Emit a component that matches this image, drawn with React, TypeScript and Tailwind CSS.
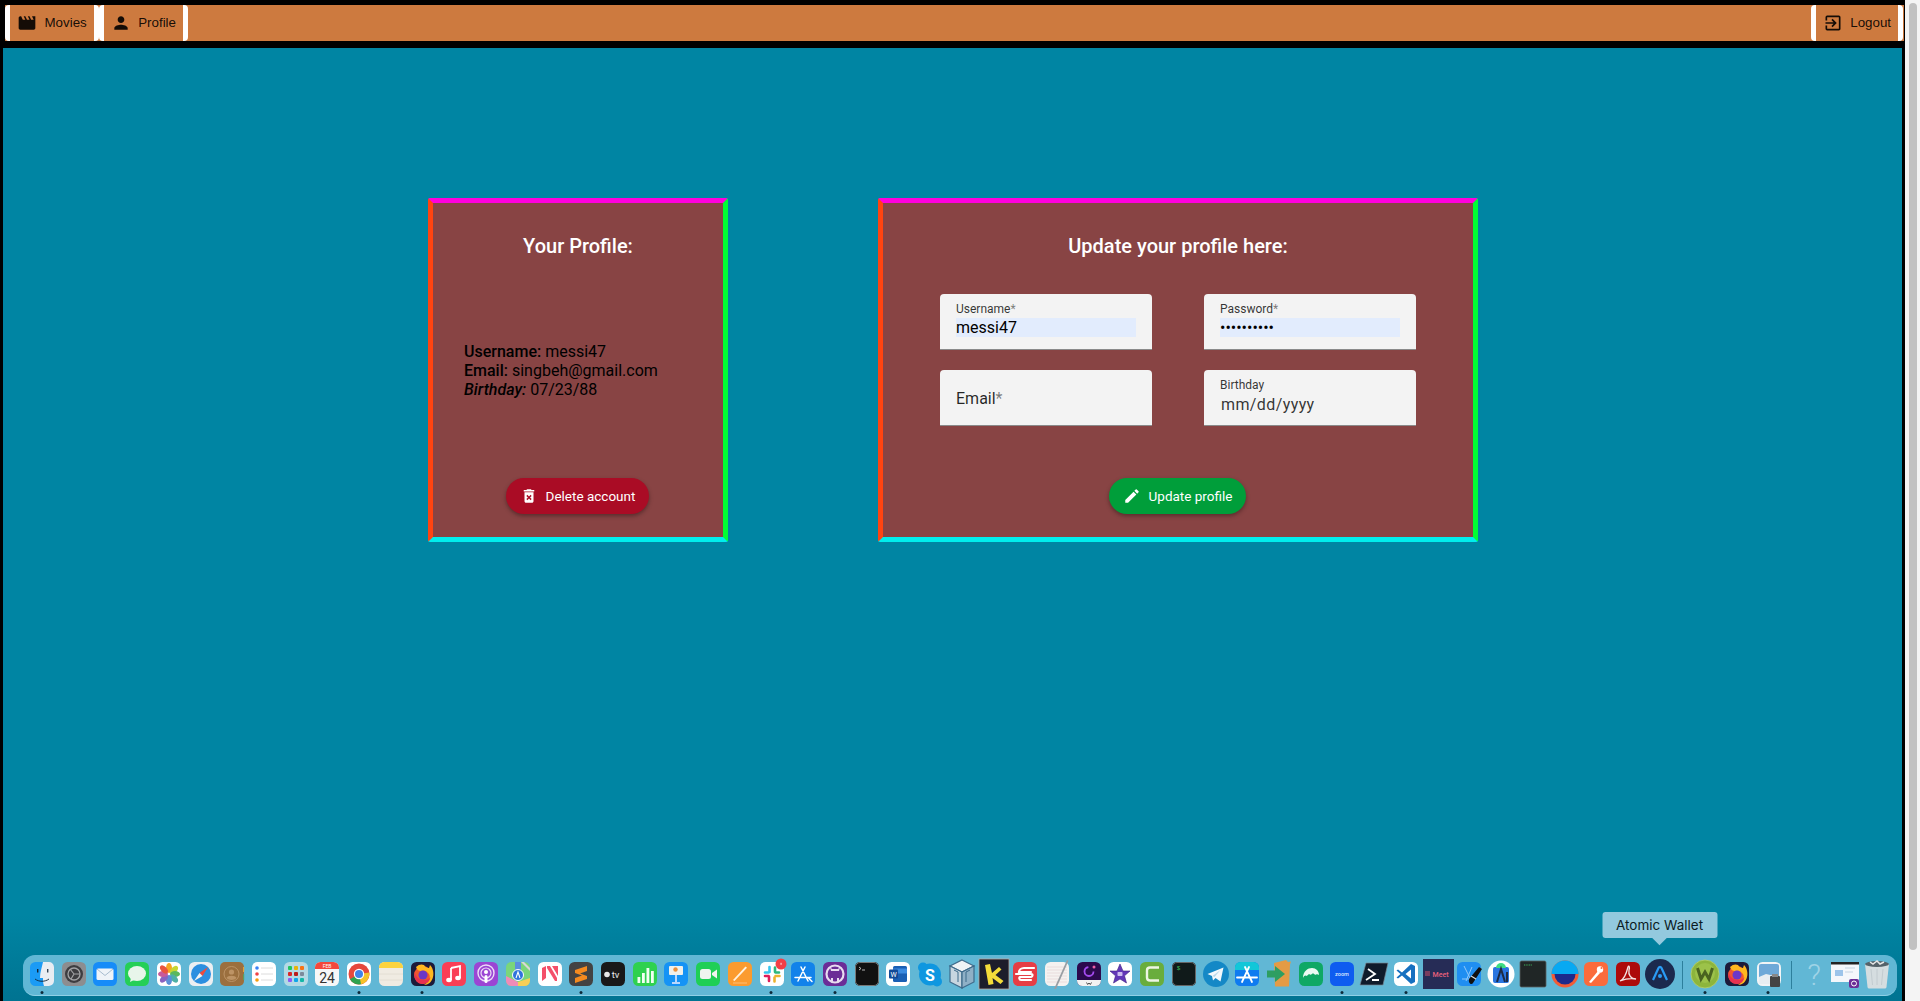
import type { ReactNode } from "react";
import { MdDeleteForever, MdEdit, MdExitToApp, MdMovie, MdPerson } from "react-icons/md";

const Base = ({ fill, rx = 5.5 }: { fill: string; rx?: number }) => (
    <rect x="4" y="4" width="24" height="24" rx={rx} fill={fill} />
);

// dock icons, each one drawn in a 32x32 box
const firefoxGlyph = (
    <>
        <circle cx="16" cy="17" r="9" fill="#f0562f" />
        <path d="M9 9c3-3 6-3 8-2 1 2 3 3 5 3l1-3c3 3 4 8 3 12-1 5-5 8-9 8 5-3 7-7 5-11-2-3-5-4-8-3-2 0-4-1-5-4z" fill="#ffb81f" />
        <circle cx="16" cy="17" r="4.5" fill="#6b37c8" />
        <path d="M7.500 14c1 5 5 8 10 8 3 0 5-1 6-3-1 5-4 7-8 7-5 0-9-4-8-12z" fill="#e8314f" />
    </>
);

const pieces: ReactNode[] = [
    // finder
    <>
        <Base fill="#1b9bf5" />
        <path d="M17 4h6a5 5 0 0 1 5 5v14a5 5 0 0 1-5 5h-5c-1-3-1-5-1-8h-3c0-6 2-11 3-16z" fill="#e9edf2" />
        <rect x="11" y="11" width="1.400" height="3.500" fill="#123" />
        <rect x="21" y="11" width="1.400" height="3.500" fill="#345" />
        <path d="M9 21c4 3 10 3 14 0" stroke="#123" strokeWidth="0.900" fill="none" />
    </>,
    // system settings
    <>
        <Base fill="#8d8d8f" />
        <circle cx="16" cy="16" r="9" fill="#3d3d40" />
        <circle cx="16" cy="16" r="6" fill="none" stroke="#a3a3a5" strokeWidth="1.300" />
        <path d="M16 16h6M16 16l-4-5M16 16l-3 5" stroke="#a3a3a5" strokeWidth="1.200" />
    </>,
    // mail
    <>
        <Base fill="#168cf8" />
        <rect x="7.500" y="10.500" width="17" height="11.500" rx="1.500" fill="#eef3f8" />
        <path d="M8 11l8 6.500 8-6.500" stroke="#9fb5c9" strokeWidth="0.900" fill="none" />
    </>,
    // messages
    <>
        <Base fill="#25cf56" />
        <ellipse cx="16" cy="15.500" rx="9" ry="7.500" fill="#e8f5ea" />
        <path d="M10 20l-1 4 5-2.500z" fill="#e8f5ea" />
    </>,
    // photos
    <>
        <Base fill="#ffffff" />
        <ellipse cx="16" cy="10" rx="3" ry="5" fill="#f5a623" />
        <ellipse cx="21" cy="12" rx="3" ry="5" fill="#c8d633" transform="rotate(45 21 12)" />
        <ellipse cx="22" cy="16" rx="5" ry="3" fill="#5cb85c" />
        <ellipse cx="21" cy="20.500" rx="3" ry="5" fill="#4fb0a5" transform="rotate(-45 21 20.500)" />
        <ellipse cx="16" cy="22" rx="3" ry="5" fill="#5b8fd6" />
        <ellipse cx="11" cy="20.500" rx="3" ry="5" fill="#8a63c0" transform="rotate(45 11 20.500)" />
        <ellipse cx="10" cy="16" rx="5" ry="3" fill="#c85a9b" />
        <ellipse cx="11" cy="11.500" rx="3" ry="5" fill="#e8553f" transform="rotate(-45 11 11.500)" />
    </>,
    // safari
    <>
        <Base fill="#eceff2" />
        <circle cx="16" cy="16" r="10" fill="#2c8fe0" />
        <path d="M23 9l-5.500 9-3-3z" fill="#ef4b3c" />
        <path d="M9 23l5.500-8 3 3z" fill="#f2f2f2" />
    </>,
    // contacts
    <>
        <Base fill="#9b6f3e" rx="5" />
        <circle cx="15.500" cy="16" r="7.500" fill="none" stroke="#bd9365" strokeWidth="1" />
        <circle cx="15.500" cy="14" r="2.600" fill="#bd9365" />
        <path d="M10.500 20c1-3 9-3 10 0-2 2.500-8 2.500-10 0z" fill="#bd9365" />
        <rect x="27" y="9" width="1.200" height="5" fill="#e4a13a" />
        <rect x="27" y="16" width="1.200" height="6" fill="#5c9e5f" />
    </>,
    // reminders
    <>
        <Base fill="#ffffff" />
        <circle cx="9" cy="10" r="1.800" fill="#3b82f6" />
        <circle cx="9" cy="16" r="1.800" fill="#ef4444" />
        <circle cx="9" cy="22" r="1.800" fill="#f59e0b" />
        <path d="M13 10h12M13 16h12M13 22h12" stroke="#dcdcdc" strokeWidth="1" />
    </>,
    // launchpad
    <>
        <Base fill="#b4d9e4" />
        {["#22c55e", "#eab308", "#f97316", "#dc2626", "#b91c1c", "#7c8a9a", "#8b5cf6", "#0ea5e9", "#14b8a6"].map((c, i) => (
            <rect key={i} x={8 + (i % 3) * 6} y={8 + Math.floor(i / 3) * 6} width="4" height="4" rx="1" fill={c} />
        ))}
    </>,
    // calendar
    <>
        <Base fill="#f7f7f7" />
        <path d="M4 11V9.500a5.500 5.500 0 0 1 5.500-5.500h13a5.500 5.500 0 0 1 5.500 5.500V11z" fill="#f4483b" />
        <text x="16" y="9.800" textAnchor="middle" fontSize="5" fill="#fff" fontFamily="Roboto, sans-serif">FEB</text>
        <text x="16" y="25" textAnchor="middle" fontSize="14" fill="#333" fontFamily="Roboto, sans-serif">24</text>
    </>,
    // chrome
    <>
        <Base fill="#ffffff" />
        <circle cx="16" cy="16" r="10.500" fill="#e6483c" />
        <path d="M16 16L6.900 21.200A10.500 10.500 0 0 0 19 26z" fill="#2fa24f" />
        <path d="M16 16l10.400-1.500A10.500 10.500 0 0 1 18 26.300z" fill="#f6c229" />
        <circle cx="16" cy="16" r="5.200" fill="#fff" />
        <circle cx="16" cy="16" r="4" fill="#3f83e8" />
    </>,
    // notes
    <>
        <Base fill="#f0ebe2" />
        <path d="M4 10V9.500a5.500 5.500 0 0 1 5.500-5.500h13a5.500 5.500 0 0 1 5.500 5.500V10z" fill="#fcd33f" />
        <path d="M4 16h24M4 22h24" stroke="#e0dbd0" strokeWidth="0.800" />
    </>,
    // firefox
    <>
        <Base fill="#1c1b3a" />
        {firefoxGlyph}
    </>,
    // music
    <>
        <Base fill="#fa3e55" />
        <path d="M13 10l9-2v12" stroke="#fff" strokeWidth="1.800" fill="none" />
        <path d="M13 10v12" stroke="#fff" strokeWidth="1.800" />
        <ellipse cx="11" cy="22" rx="2.800" ry="2.200" fill="#fff" />
        <ellipse cx="20" cy="20" rx="2.800" ry="2.200" fill="#fff" />
    </>,
    // podcasts
    <>
        <Base fill="#9b45d4" />
        <circle cx="16" cy="15" r="8" fill="none" stroke="#eddcf7" strokeWidth="1.400" />
        <circle cx="16" cy="15" r="5" fill="none" stroke="#eddcf7" strokeWidth="1.200" />
        <circle cx="16" cy="14" r="2" fill="#fff" />
        <rect x="14.500" y="17" width="3" height="8" rx="1.500" fill="#fff" />
    </>,
    // maps
    <>
        <Base fill="#7ad67a" />
        <path d="M4 18l12 6 0 4H9.500A5.500 5.500 0 0 1 4 22.500z" fill="#f08bb8" />
        <path d="M16 24l12-4v2.500a5.500 5.500 0 0 1-5.500 5.500H16z" fill="#f6cf55" />
        <path d="M22 4l6 6v3l-9-9z" fill="#d8d8d8" />
        <path d="M13 4h6v8h-6z" fill="#5b8fe0" />
        <circle cx="16" cy="17" r="5.500" fill="#2f74dc" stroke="#fff" strokeWidth="1" />
        <path d="M14 20l2-6 2 6" stroke="#fff" strokeWidth="1.100" fill="none" />
    </>,
    // news
    <>
        <Base fill="#ffffff" />
        <path d="M8 10l4-2v12l-4 3z" fill="#f4506a" />
        <path d="M13 8h3l7 12v3h-2l-8-13z" fill="#f4506a" />
        <path d="M18 8h6v10z" fill="#f4506a" />
    </>,
    // sublime
    <>
        <Base fill="#434343" />
        <path d="M22 8v5l-7 2.500 7 2.500v3l-12 4v-5l7-2.500-7-2.500v-3z" fill="#f58a1f" />
    </>,
    // apple tv
    <>
        <Base fill="#191919" />
        <circle cx="10" cy="16.500" r="2.800" fill="#e8e8e8" />
        <text x="18.500" y="19.800" textAnchor="middle" fontSize="9.500" fill="#e8e8e8" fontFamily="Roboto, sans-serif">tv</text>
    </>,
    // numbers
    <>
        <Base fill="#2fd14f" />
        <rect x="8.500" y="19" width="2.800" height="6" fill="#f3fff3" />
        <rect x="13" y="15" width="2.800" height="10" fill="#f3fff3" />
        <rect x="17.500" y="10" width="2.800" height="15" fill="#f3fff3" />
        <rect x="22" y="13" width="2.800" height="12" fill="#f3fff3" />
    </>,
    // keynote
    <>
        <Base fill="#1593f5" />
        <rect x="9" y="8" width="14" height="9" rx="1" fill="#f0f0ea" />
        <circle cx="15.500" cy="11.500" r="2.200" fill="#e88f3c" />
        <path d="M16 17v7M12 25h8" stroke="#eef" strokeWidth="1.500" />
    </>,
    // facetime
    <>
        <Base fill="#1fcf55" />
        <rect x="8" y="11" width="11" height="10" rx="2.500" fill="#f0f4f0" />
        <path d="M20 15l5-3.500v9L20 17z" fill="#f0f4f0" />
    </>,
    // pages
    <>
        <Base fill="#fb9b2f" />
        <path d="M9 22L21.500 8.500l1.500 1.300L10.500 23z" fill="#fff2df" />
        <path d="M9 25h14" stroke="#ffc98a" strokeWidth="0.800" />
    </>,
    // slack
    <>
        <Base fill="#ffffff" />
        <path d="M13.500 9v5M9 14.500h3.500" stroke="#36c5f0" strokeWidth="2.600" strokeLinecap="round" />
        <path d="M19 9.500v4.500M19.500 14.500H23" stroke="#2eb67d" strokeWidth="2.600" strokeLinecap="round" />
        <path d="M18.500 19.500v4M19.500 18h4" stroke="#ecb22e" strokeWidth="2.600" strokeLinecap="round" />
        <path d="M13 18.500v4.500M9 18h3.500" stroke="#e01e5a" strokeWidth="2.600" strokeLinecap="round" />
        <circle cx="25" cy="6" r="5.500" fill="#f43f45" />
        <rect x="24.600" y="4.800" width="0.900" height="2" fill="#fff" />
    </>,
    // app store
    <>
        <Base fill="#1282ea" />
        <path d="M11 23l7-14M21 23l-7-14M8 19.500h16M21 19.500l4 4" stroke="#fff" strokeWidth="1.500" fill="none" strokeLinecap="round" />
    </>,
    // github desktop
    <>
        <Base fill="#6b2d97" />
        <circle cx="16" cy="16" r="8.500" fill="none" stroke="#e8dcf0" strokeWidth="2.200" />
        <path d="M11 9l1 4h8l1-4-2 2h-6z" fill="#e8dcf0" />
        <path d="M13 24v-4M19 24v-4" stroke="#e8dcf0" strokeWidth="2" />
    </>,
    // terminal
    <>
        <Base fill="#111" rx="5" />
        <rect x="4.500" y="4.500" width="23" height="23" rx="4.500" fill="none" stroke="#777" strokeWidth="1" />
        <path d="M8 9l2 1.500L8 12" stroke="#ddd" strokeWidth="0.800" fill="none" />
        <path d="M11 12h3" stroke="#ddd" strokeWidth="0.800" />
    </>,
    // word
    <>
        <Base fill="#ffffff" />
        <rect x="11" y="8" width="14" height="16" rx="1.500" fill="#1a5fb4" />
        <path d="M11 13h14" stroke="#3a8ae0" strokeWidth="5" />
        <rect x="7" y="11.500" width="9" height="9" rx="1" fill="#124a96" />
        <text x="11.500" y="18.500" textAnchor="middle" fontSize="7" fill="#fff" fontFamily="Roboto, sans-serif">W</text>
    </>,
    // skype
    <>
        <circle cx="16" cy="16.500" r="11" fill="#0f97e0" />
        <circle cx="9" cy="9.500" r="5" fill="#0f97e0" />
        <circle cx="23" cy="23.500" r="5" fill="#0f97e0" />
        <text x="16" y="22.500" textAnchor="middle" fontSize="16" fontWeight="700" fill="#fff" fontFamily="Roboto, sans-serif">S</text>
    </>,
    // virtualbox
    <>
        <path d="M16 2l12 6v16l-12 6-12-6V8z" fill="#dfe7ee" />
        <path d="M16 2l12 6-12 6L4 8z" fill="#eef2f5" stroke="#3d6a8a" strokeWidth="1.200" />
        <path d="M4 8l12 6v16L4 24z" fill="#c7d6e0" stroke="#3d6a8a" strokeWidth="1.200" />
        <path d="M16 14l12-6v16l-12 6z" fill="#8fb0c6" stroke="#3d6a8a" strokeWidth="1.200" />
        <path d="M8 12l4 2v10M24 12l-4 2v10" stroke="#3d6a8a" strokeWidth="1" fill="none" />
    </>,
    // K
    <>
        <rect x="1" y="1" width="30" height="30" fill="#1d1d2b" stroke="#b9a9a0" strokeWidth="0.800" />
        <path d="M7 7l5-1 2 9 7-6 2.500 2.500-6 5.500 8 6-3 3-8-6 1 6-5 1z" fill="#f4dc3a" />
    </>,
    // expressvpn
    <>
        <Base fill="#e63d45" />
        <path d="M25 10H15c-3 0-5 2-5 4h12M7 16h15c2 0 2 2.500 0 3H11c-1 0-1 3 1 3h10" stroke="#fff" strokeWidth="2.200" fill="none" strokeLinecap="round" />
    </>,
    // textedit
    <>
        <Base fill="#f5f2f0" />
        <path d="M6 9h20M6 12h20M6 15h20M6 18h20M6 21h20M6 24h20" stroke="#e0cfd0" strokeWidth="0.600" />
        <path d="M13 31L26 2l1.500 0.700L15 31z" fill="#999ea3" />
    </>,
    // screen recorder
    <>
        <Base fill="#2c0a4d" />
        <path d="M4 22h24v.500a5.500 5.500 0 0 1-5.500 5.500h-13A5.500 5.500 0 0 1 4 22.500z" fill="#f2f2f2" />
        <circle cx="16" cy="13.500" r="4.500" fill="none" stroke="#a44bf0" strokeWidth="1.800" strokeDasharray="20 8" />
        <circle cx="21" cy="9" r="1.500" fill="#ef5fa7" />
        <path d="M13.500 24.500l1.200 2 1.300-1.500 1.300 1.500 1.200-2" stroke="#222" strokeWidth="0.800" fill="none" />
    </>,
    // imovie
    <>
        <Base fill="#ffffff" />
        <path d="M16 6l3 7h7l-5.500 4.800 2 7.200-6.500-4-6.500 4 2-7.200L6 13h7z" fill="#6338b8" stroke="#3e2080" strokeWidth="0.600" />
        <rect x="13.500" y="14" width="5" height="4" rx="0.800" fill="#cdbcf0" />
    </>,
    // camtasia
    <>
        <Base fill="#69ad3d" />
        <path d="M23 9.500h-9c-2 0-3 1-3 3v7c0 2 1 3 3 3h9" stroke="#eef5e4" strokeWidth="2.400" fill="none" />
    </>,
    // iterm
    <>
        <Base fill="#101a1a" rx="5" />
        <rect x="4.500" y="4.500" width="23" height="23" rx="4.500" fill="none" stroke="#666" strokeWidth="1" />
        <text x="10.500" y="12" textAnchor="middle" fontSize="6" fill="#3fc35f" fontFamily="Liberation Mono, monospace">$</text>
    </>,
    // telegram
    <>
        <circle cx="16" cy="16" r="13" fill="#1488c6" />
        <path d="M7.500 16l16-6.500-3 14-5-3.500-2.500 2.500-1-4.500z" fill="#f2f8fc" />
        <path d="M12.500 18l8-6-6 7z" fill="#b8d8ea" />
    </>,
    // app store connect
    <>
        <rect x="4" y="4" width="24" height="24" rx="5.500" fill="#0f7bf0" />
        <path d="M4 12V9.500A5.500 5.500 0 0 1 9.500 4h13A5.500 5.500 0 0 1 28 9.500V12z" fill="#12c7d8" />
        <path d="M11 24l7-15M21 24l-7-15M6 19.500h20" stroke="#fff" strokeWidth="1.800" fill="none" strokeLinecap="round" />
    </>,
    // transmit box
    <>
        <path d="M11 5l12-3 2 2 3-.500-1 3-1 22H12z" fill="#e49b45" />
        <path d="M4 12.500h8V8l10 8-10 8v-4.500H4z" fill="#2e9e62" />
    </>,
    // green rounded
    <>
        <Base fill="#0fa864" />
        <path d="M8 20c0-7 5-10 9-10 4 0 7 3 7 7-1-1-3-1-4 0-1-2-3-2-4 0-1-1-3-1-4 1-1-1-3-1-4 2z" fill="#eafaf2" />
    </>,
    // zoom
    <>
        <Base fill="#0e5cf0" />
        <text x="16" y="17.500" textAnchor="middle" fontSize="5.500" fontWeight="500" fill="#dbe7ff" fontFamily="Roboto, sans-serif">zoom</text>
    </>,
    // powershell
    <>
        <path d="M8 5h22l-5 22H2z" fill="#0f1b2b" stroke="#7a8794" strokeWidth="0.700" />
        <path d="M10 11l7 5-9 6M14 22h7" stroke="#fff" strokeWidth="1.800" fill="none" />
    </>,
    // vscode
    <>
        <Base fill="#ffffff" />
        <path d="M21 6l4 2v16l-4 2-9-8.500-4 3-1.500-1 4-3.500-4-3.500 1.500-1 4 3zM21 11.500L15.500 16l5.500 4.500z" fill="#1670c0" />
    </>,
    // meet
    <>
        <rect x="1" y="1" width="31" height="30" fill="#262c56" />
        <text x="18.500" y="18.500" textAnchor="middle" fontSize="7" fontWeight="500" fill="#e8607c" fontFamily="Roboto, sans-serif">Meet</text>
        <rect x="3" y="13" width="5" height="5" fill="#7a3d5e" />
    </>,
    // xcode
    <>
        <Base fill="#1f8ef1" />
        <path d="M11 8l8 16M9 21h14M19 9l-6 14" stroke="#8fc8fa" strokeWidth="1" />
        <path d="M16 21l10-12 3 2-9 14c-1 2-5 1-4-4z" fill="#111" />
        <path d="M18 18l5 3" stroke="#ddd" strokeWidth="1.200" />
    </>,
    // android studio
    <>
        <circle cx="16" cy="16" r="13.500" fill="#ffffff" />
        <rect x="8" y="9" width="16" height="16" rx="2" fill="#2a75e0" />
        <path d="M11 10a5 5 0 0 1 10 0z" fill="#3ddc84" />
        <path d="M12 24l4-13 4 13" stroke="#1d2a44" strokeWidth="2" fill="none" />
        <rect x="21" y="14" width="2" height="10" fill="#1d2a44" />
    </>,
    // terminal, green text
    <>
        <rect x="3" y="3" width="26" height="26" rx="1.500" fill="#202626" stroke="#586060" strokeWidth="0.800" />
        <path d="M7 7h8" stroke="#3fb45f" strokeWidth="1.200" strokeDasharray="1 0.700" />
    </>,
    // half disc
    <>
        <circle cx="16" cy="16" r="13.500" fill="#f25c35" />
        <path d="M2.500 16a13.500 13.500 0 0 1 27 0z" fill="#08a9f2" />
        <path d="M5.500 16h21a10.500 10.500 0 0 1-21 0z" fill="#1d2a8c" />
    </>,
    // postman
    <>
        <Base fill="#fb6b3c" />
        <path d="M9 24l9-11 2 2-9 10z" fill="#fff" />
        <circle cx="20" cy="11.500" r="3.200" fill="#fff" />
        <circle cx="21.500" cy="10" r="1" fill="#fb6b3c" />
    </>,
    // acrobat
    <>
        <Base fill="#ad0b0b" />
        <path d="M8 23c3-1 6-6 8-14 1-2 2 0 1 3-1 5 2 9 7 9-6-1-11 0-16 2z" fill="none" stroke="#f4e6e6" strokeWidth="1.300" />
    </>,
    // atomic wallet
    <>
        <circle cx="16" cy="16" r="15" fill="#1b2a4e" />
        <path d="M9 22l5.500-12c.800-1.600 2.200-1.600 3 0L23 22" stroke="#2a9cf5" strokeWidth="2.200" fill="none" />
        <circle cx="16" cy="18" r="2" fill="#2a9cf5" />
    </>,
    // w
    <>
        <circle cx="16" cy="16" r="14" fill="#8db53c" stroke="#b5d06e" strokeWidth="0.800" />
        <circle cx="16" cy="15" r="10" fill="#9cc24a" />
        <path d="M8.500 10l3.500 11 4-7 4 7 3.500-11" stroke="#4a6420" strokeWidth="3" fill="none" />
    </>,
    // firefox, second copy
    <>
        <Base fill="#1c1b3a" />
        {firefoxGlyph}
    </>,
    // preview
    <>
        <Base fill="#f1f4f6" />
        <rect x="6" y="6" width="20" height="20" rx="2" fill="#6ea9d8" />
        <path d="M6 19l7-3 13 3v7H6z" fill="#e8eef2" />
        <rect x="17" y="18" width="10" height="11" rx="1" fill="#444" />
        <rect x="19" y="16" width="6" height="3" fill="#888" />
    </>,
    // help
    <>
        <text x="16" y="27" textAnchor="middle" fontSize="30" fontWeight="300" fill="#9fd3e6" fontFamily="Roboto, sans-serif">?</text>
    </>,
    // minimized window
    <>
        <rect x="1" y="6" width="28" height="18" fill="#f4f7fb" />
        <rect x="1" y="4" width="28" height="2.500" fill="#222" />
        <rect x="5" y="12" width="8" height="6" fill="#9cc4ea" />
        <path d="M15 10h10M15 14h8" stroke="#c5d4e2" strokeWidth="1" />
        <rect x="19" y="21" width="10" height="9" rx="2" fill="#6b2d97" />
        <circle cx="24" cy="25.500" r="2.500" fill="none" stroke="#fff" strokeWidth="1" />
    </>,
    // trash
    <>
        <path d="M4 6h24l-2.500 23c-.200 1-1 1.500-2 1.500h-15c-1 0-1.800-.500-2-1.500z" fill="#d5dde0" />
        <ellipse cx="16" cy="6" rx="12" ry="3" fill="#55626a" />
        <path d="M9 4l3 2 4-3 3 3 4-2" stroke="#e6e6e6" strokeWidth="1.500" fill="none" />
        <path d="M10 11l1.500 16M16 11v16M22 11l-1.500 16" stroke="#bcc7cc" strokeWidth="0.800" />
    </>,
];

const running = [0, 10, 12, 17, 23, 25, 41, 43, 52, 54];
const dividersBefore = [52, 55];

function Dock() {
    return (
        <div className="mt-auto mb-[5px] ml-[20px] mr-[5px] flex h-[41px] shrink-0 rounded-[12px] border-b border-[#8fd0e6] bg-[#61b7d5] pl-[3px]">
            {pieces.map((piece, i) => (
                <div key={i} className="flex">
                    {dividersBefore.includes(i) && (
                        <div className="flex w-[13.7px] items-center justify-center">
                            <div className="h-[28px] w-px bg-[#2d7f9c]" />
                        </div>
                    )}
                    <div className="relative h-[40px] w-[31.73px]">
                        <svg width="32" height="32" viewBox="0 0 32 32" className="mt-[3px] overflow-visible">
                            {piece}
                        </svg>
                        {running.includes(i) && (
                            <div className="absolute bottom-[1px] left-1/2 size-[3px] -translate-x-1/2 rounded-full bg-[#0d2a3a]" />
                        )}
                        {i === 51 && (
                            <div className="absolute bottom-[57px] left-1/2 -translate-x-1/2">
                                <div className="flex h-[26px] w-[115px] items-center justify-center rounded-[3px] bg-[#93c9de] font-['Inter',sans-serif] text-[13.5px] text-[#0b1a22]">
                                    Atomic Wallet
                                </div>
                                <div className="absolute -bottom-[5px] left-1/2 size-[11px] -translate-x-1/2 rotate-45 bg-[#93c9de]" />
                            </div>
                        )}
                    </div>
                </div>
            ))}
        </div>
    );
}

function NavTab({ icon, label }: { icon: ReactNode; label: string }) {
    return (
        <div className="flex h-full items-center gap-[7.5px] rounded-[4px] border-x-[5px] border-white px-[7px] font-['Liberation_Sans',sans-serif] text-[13.33px] text-black/90">
            {icon}
            <span>{label}</span>
        </div>
    );
}

function Card({ title, width, children }: { title: string; width: string; children: ReactNode }) {
    return (
        <section
            className={`flex h-[344px] ${width} flex-col items-center rounded-[2px] border-[5px] border-t-[#ff00dd] border-r-[#00ff33] border-b-[#00eeee] border-l-[#ff4411] bg-[#884444] pt-[27px] pb-[23px]`}
        >
            <h2 className="text-[20px] leading-[32px] font-medium text-white">{title}</h2>
            {children}
        </section>
    );
}

function Field({ label, value }: { label: string; value: string }) {
    return (
        <div className="h-[56px] rounded-t-[4px] border-b border-[#8a8a8a] bg-[#f3f3f3] px-4 pt-[8px]">
            <div className="text-[12px] leading-[14px] text-black/80">
                {label}
                <span className="text-black/50">*</span>
            </div>
            <div className="mt-[2px] h-[19px] w-[180px] bg-[#e2ecfd] text-[16px] leading-[19px] text-black">{value}</div>
        </div>
    );
}

export default function App() {
    return (
        <div className="flex h-[1001px] w-full overflow-hidden bg-black font-['Roboto',sans-serif]">
            <div className="flex min-w-0 flex-1 flex-col">
                <nav className="mt-[5px] ml-[5px] mr-px flex h-[36px] shrink-0 justify-between bg-[#cd7a3f]">
                    <div className="flex h-full">
                        <NavTab icon={<MdMovie className="size-5" />} label="Movies" />
                        <NavTab icon={<MdPerson className="size-5" />} label="Profile" />
                    </div>
                    <div className="mr-px h-full">
                        <NavTab icon={<MdExitToApp className="size-5" />} label="Logout" />
                    </div>
                </nav>

                <main className="mt-[7px] ml-[3px] mr-[3px] flex min-h-0 flex-1 flex-col bg-[linear-gradient(to_bottom,#0085a3_91%,#007391_100%)]">
                    <div className="flex gap-[150px] pt-[150px] pl-[425px]">
                        <Card title="Your Profile:" width="w-[300px]">
                            <div className="flex w-full flex-1 flex-col justify-center pt-px pl-[31px] text-[16px] leading-[19px] text-black">
                                <p>
                                    <span className="font-medium">Username:</span> messi47
                                </p>
                                <p>
                                    <span className="font-medium">Email:</span> singbeh@gmail.com
                                </p>
                                <p>
                                    <em className="font-medium">Birthday:</em> 07/23/88
                                </p>
                            </div>
                            <button className="mr-px flex h-[36px] w-[143px] items-center justify-center gap-[8px] rounded-[18px] bg-[#aa0c25] text-[13.5px] font-normal text-white shadow-[0_2px_4px_rgba(0,0,0,0.35)]">
                                <MdDeleteForever className="size-[18px]" />
                                Delete account
                            </button>
                        </Card>

                        <Card title="Update your profile here:" width="w-[600px]">
                            <div className="mt-[32px] grid grid-cols-[212px_212px] gap-x-[52px] gap-y-[20px]">
                                <Field label="Username" value="messi47" />
                                <Field label="Password" value="••••••••••" />
                                <div className="flex h-[56px] items-center rounded-t-[4px] border-b border-[#8a8a8a] bg-[#f3f3f3] px-4 pt-[2px] text-[16px] text-black/85">
                                    Email<span className="text-black/50">*</span>
                                </div>
                                <div className="h-[56px] rounded-t-[4px] border-b border-[#8a8a8a] bg-[#f3f3f3] px-4 pt-[8px]">
                                    <div className="text-[12px] leading-[14px] text-black/80">Birthday</div>
                                    <div className="mt-[3px] pl-px text-[16px] leading-[20px] tracking-[0.4px] text-black/80">mm/dd/yyyy</div>
                                </div>
                            </div>
                            <button className="mt-auto mr-px flex h-[36px] w-[137px] items-center justify-center gap-[8px] rounded-[18px] bg-[#009e3a] text-[13.5px] font-normal text-white shadow-[0_2px_4px_rgba(0,0,0,0.35)]">
                                <MdEdit className="size-[18px]" />
                                Update profile
                            </button>
                        </Card>
                    </div>

                    <Dock />
                </main>
            </div>

            {/* scrollbar */}
            <div className="flex w-[15px] shrink-0 justify-center bg-[#f4f4f4] pt-[3px]">
                <div className="h-[947px] w-[8px] rounded-full bg-[#c1c1c1]" />
            </div>
        </div>
    );
}
